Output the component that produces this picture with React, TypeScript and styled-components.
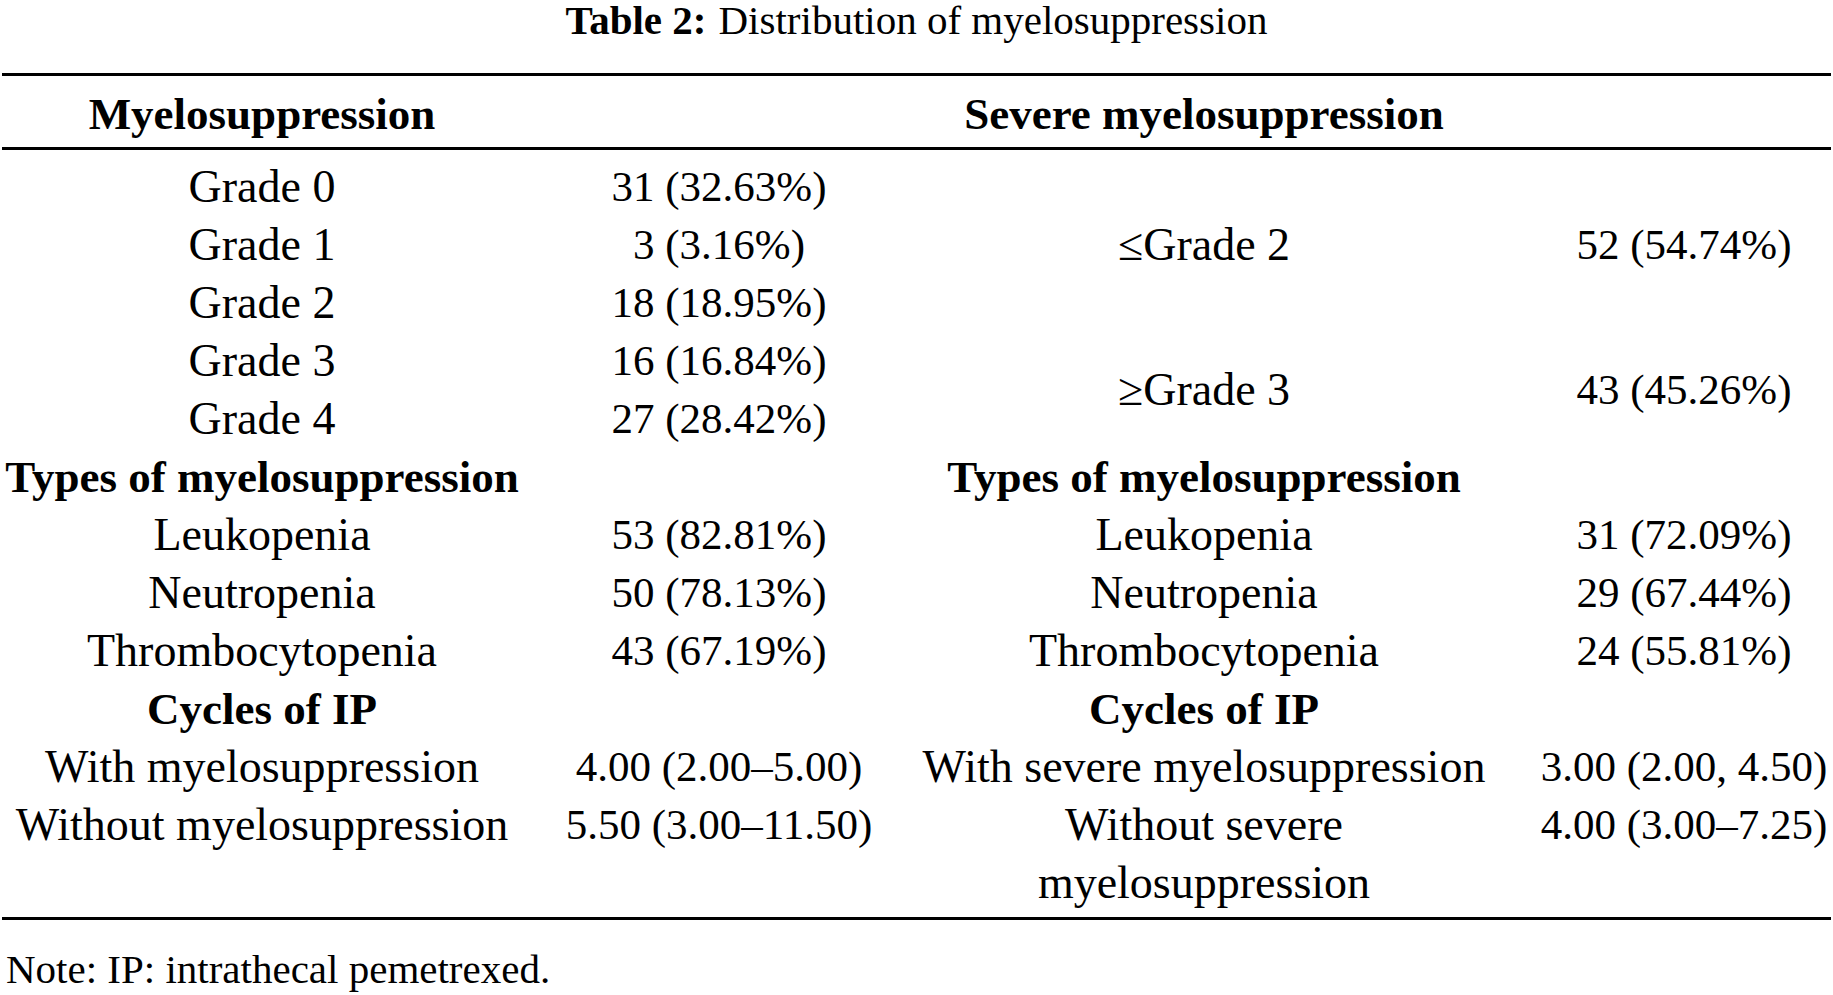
import * as React from "react";
import styled, { createGlobalStyle } from "styled-components";

const GlobalStyle = createGlobalStyle`
  html, body {
    margin: 0;
    padding: 0;
    background: #fff;
  }
  body {
    font-family: "Liberation Serif", "Times New Roman", serif;
    color: #000;
  }
`;

const Page = styled.div`
  width: 1833px;
`;

const Caption = styled.div`
  font-size: 41px;
  line-height: 40px;
  text-align: center;
  margin-bottom: 33px;
  b {
    font-weight: 700;
    margin-right: 12px;
  }
`;

const Grid = styled.div`
  display: grid;
  grid-template-columns: 520px 394px 576px 343px;
  grid-auto-rows: minmax(58px, auto);
  margin: 0 2px;
`;

const Head = styled(Grid)`
  border-top: 3px solid #000;
  border-bottom: 3px solid #000;
  padding: 9px 0 4px;
`;

const Body = styled(Grid)`
  border-bottom: 3px solid #000;
  padding: 8px 0 5px;
`;

interface CellProps {
  $span?: number;
  $bold?: boolean;
  $last?: boolean;
}

const Cell = styled.div<CellProps>`
  font-size: ${(p) => (p.$bold ? "45px" : "46px")};
  line-height: 58px;
  font-weight: ${(p) => (p.$bold ? 700 : 400)};
  text-align: center;
  white-space: ${(p) => (p.$span ? "nowrap" : "normal")};
  grid-row: ${(p) => (p.$span ? `span ${p.$span}` : "auto")};
  align-self: ${(p) => (p.$span ? "center" : "start")};
  padding-left: ${(p) => (p.$last ? "41px" : "0")};
`;

const Value = styled(Cell)`
  font-size: 43px;
  white-space: nowrap;
`;

const Note = styled.div`
  font-size: 41px;
  line-height: 58px;
  margin: 20px 0 0 6px;
`;

const App = () => {
  return (
    <Page>
      <GlobalStyle />
      <Caption>
        <b>Table 2:</b>Distribution of myelosuppression
      </Caption>
      <Head>
        <Cell $bold>Myelosuppression</Cell>
        <Cell />
        <Cell $bold>Severe myelosuppression</Cell>
        <Cell $last />
      </Head>
      <Body>
        <Cell>Grade 0</Cell>
        <Value>31 (32.63%)</Value>
        <Cell $span={3}>≤Grade 2</Cell>
        <Value $span={3} $last>
          52 (54.74%)
        </Value>
        <Cell>Grade 1</Cell>
        <Value>3 (3.16%)</Value>
        <Cell>Grade 2</Cell>
        <Value>18 (18.95%)</Value>
        <Cell>Grade 3</Cell>
        <Value>16 (16.84%)</Value>
        <Cell $span={2}>≥Grade 3</Cell>
        <Value $span={2} $last>
          43 (45.26%)
        </Value>
        <Cell>Grade 4</Cell>
        <Value>27 (28.42%)</Value>

        <Cell $bold>Types of myelosuppression</Cell>
        <Cell />
        <Cell $bold>Types of myelosuppression</Cell>
        <Cell $last />

        <Cell>Leukopenia</Cell>
        <Value>53 (82.81%)</Value>
        <Cell>Leukopenia</Cell>
        <Value $last>31 (72.09%)</Value>

        <Cell>Neutropenia</Cell>
        <Value>50 (78.13%)</Value>
        <Cell>Neutropenia</Cell>
        <Value $last>29 (67.44%)</Value>

        <Cell>Thrombocytopenia</Cell>
        <Value>43 (67.19%)</Value>
        <Cell>Thrombocytopenia</Cell>
        <Value $last>24 (55.81%)</Value>

        <Cell $bold>Cycles of IP</Cell>
        <Cell />
        <Cell $bold>Cycles of IP</Cell>
        <Cell $last />

        <Cell>With myelosuppression</Cell>
        <Value>4.00 (2.00–5.00)</Value>
        <Cell>With severe myelosuppression</Cell>
        <Value $last>3.00 (2.00, 4.50)</Value>

        <Cell>Without myelosuppression</Cell>
        <Value>5.50 (3.00–11.50)</Value>
        <Cell>Without severe myelosuppression</Cell>
        <Value $last>4.00 (3.00–7.25)</Value>
      </Body>
      <Note>Note: IP: intrathecal pemetrexed.</Note>
    </Page>
  );
};

export default App;
